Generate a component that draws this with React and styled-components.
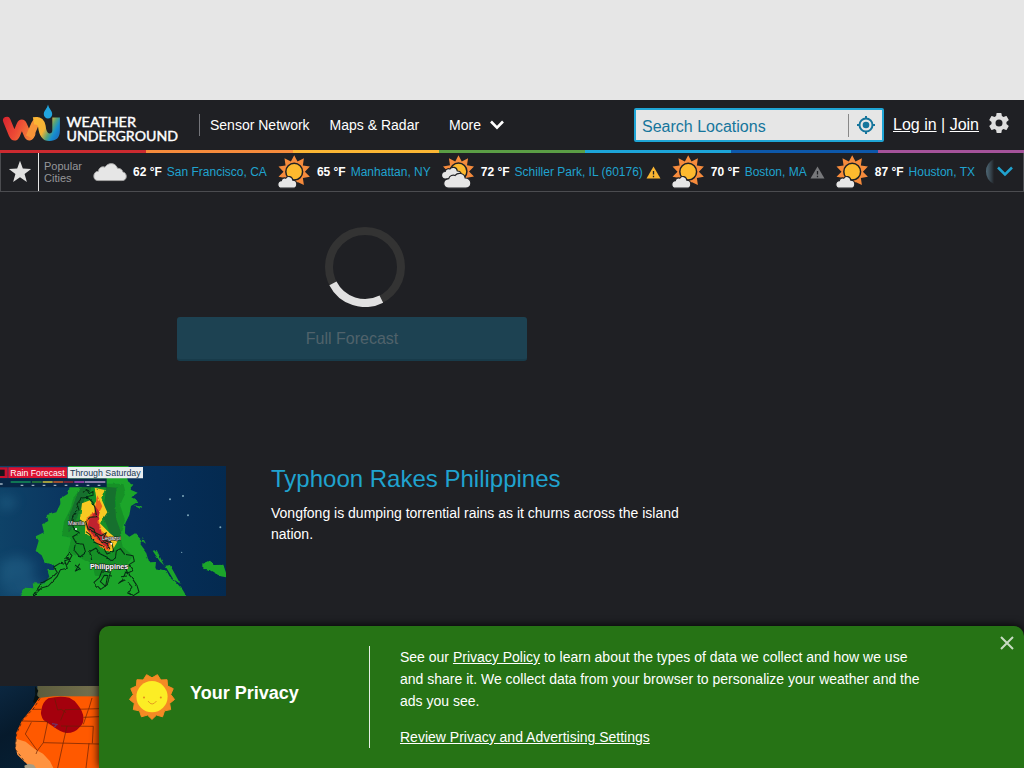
import React from "react";
import styled, { createGlobalStyle } from "styled-components";

const Global = createGlobalStyle`
  * { box-sizing: border-box; }
  html, body { margin: 0; height: 100%; overflow: hidden; background: #1f2024; }
  body { font-family: "Liberation Sans", Arial, sans-serif; color: #fff; }
  svg { display: block; flex: none; }
`;
const Page = styled.div`
  position: relative;
  width: 1024px;
  height: 768px;
  overflow: hidden;
  background: #1f2024;
`;
const AdSlot = styled.div`height: 100px; background: #e6e6e6;`;
const Header = styled.header`
  height: 50px;
  display: flex;
  align-items: center;
  padding-right: 15px;
`;
const Nav = styled.nav`
  display: flex;
  align-items: center;
  height: 22px;
  margin-left: 15px;
  padding-left: 10px;
  border-left: 1px solid #74757a;
  font-size: 14px;
  gap: 20px;
`;
const NavItem = styled.span`
  display: flex;
  align-items: center;
  gap: 9px;
  margin-left: ${(p) => p.$indent || 0}px;
`;
const Search = styled.div`
  margin-left: auto;
  width: 250px;
  height: 34px;
  display: flex;
  align-items: center;
  background: #e6e6e6;
  border: 2px solid #1fa5d5;
  border-radius: 2px;
  color: #15759c;
  font-size: 16px;
  padding: 0 6px;
`;
const SearchLabel = styled.span`flex: 1; padding-top: 3px;`;
const Locate = styled.span`
  height: 23px;
  border-left: 1px solid #888;
  padding-left: 7px;
  display: flex;
  align-items: center;
`;
const Account = styled.div`
  margin-left: 9px;
  margin-right: 10px;
  font-size: 16px;
  white-space: pre;
`;
const Settings = styled.span`padding-bottom: 4px;`;
const Link = styled.a`color: inherit; text-decoration: underline;`;
const Stripes = styled.div`display: flex; height: 3px;`;
const Stripe = styled.i`flex: 1; background: ${(p) => p.$color};`;
const CityBar = styled.div`
  position: relative;
  height: 39px;
  display: flex;
  align-items: center;
  border: 1px solid #4b4c50;
  border-top: 0;
  font-size: 12px;
  white-space: nowrap;
`;
const StarBox = styled.div`
  width: 38px;
  height: 38px;
  border-right: 1px solid #e6e6e6;
  display: flex;
  align-items: center;
  justify-content: center;
`;
const Popular = styled.div`
  width: 44px;
  margin-left: 5px;
  font-size: 11px;
  line-height: 12px;
  color: #96979a;
  padding-bottom: 1px;
`;
const Cities = styled.div`display: flex; gap: 10px; margin-left: 5px;`;
const City = styled.div`display: flex; align-items: center; height: 34px;`;
const Temp = styled.b`margin: 0 5px 0 6px;`;
const Place = styled.span`color: #20a3cf;`;
const Alert = styled.span`margin-left: 3px;`;
const More = styled.div`
  position: absolute;
  right: 0;
  top: 0;
  width: 39px;
  height: 38px;
  display: flex;
  align-items: center;
`;
const Forecast = styled.section`
  width: 350px;
  margin: 35px 0 0 177px;
  display: flex;
  flex-direction: column;
`;
const Spinner = styled.div`padding-left: 148px; margin-bottom: 10px;`;
const ForecastButton = styled.div`
  height: 44px;
  border-radius: 3px;
  background: #1d4252;
  border-bottom: 2px solid #183b4a;
  color: #50626b;
  font-size: 16px;
  line-height: 43px;
  text-align: center;
`;
const Story = styled.article`
  display: flex;
  margin-top: ${(p) => p.$top}px;
  height: 130px;
`;
const StoryText = styled.div`margin-left: 45px; width: 430px;`;
const Title = styled.h2`
  margin: -2px 0 0;
  font-size: 24px;
  font-weight: 400;
  line-height: 30px;
  color: #20a3cf;
`;
const Summary = styled.p`margin: 9px 0 0; font-size: 14px; line-height: 21px;`;
const Privacy = styled.aside`
  position: absolute;
  left: 99px;
  right: 0;
  bottom: 0;
  height: 142px;
  display: flex;
  padding: 20px 0 20px 29px;
  background: #267315;
  border-radius: 10px 10px 0 0;
  box-shadow: 0 0 10px #000;
`;
const PrivacyBrand = styled.div`
  width: 242px;
  height: 102px;
  display: flex;
  align-items: center;
  border-right: 1px solid #e6efe4;
  font-size: 18px;
  font-weight: 700;
  gap: 14px;
`;
const BrandName = styled.span`margin-top: -8px;`;
const PrivacyText = styled.div`
  width: 530px;
  margin-left: 30px;
  font-size: 14px;
  line-height: 22px;
  p { margin: 0 0 14px; }
`;
const Close = styled.div`position: absolute; right: 10px; top: 10px;`;

const star = (cx, cy, outer, inner, n, turn = 0) =>
  Array.from({ length: n * 2 }, (_, i) => {
    const r = i % 2 ? inner : outer;
    const a = (Math.PI * i) / n - Math.PI / 2 + turn;
    return `${(cx + r * Math.cos(a)).toFixed(2)},${(cy + r * Math.sin(a)).toFixed(2)}`;
  }).join(" ");

const Logo = () => (
  <svg width="184" height="50" viewBox="0 100 184 50">
    <defs>
      <linearGradient id="lw" gradientUnits="userSpaceOnUse" x1="3" y1="120" x2="36" y2="136">
        <stop offset="0" stopColor="#d9262f" /><stop offset=".45" stopColor="#ec4a35" /><stop offset="1" stopColor="#f7913a" />
      </linearGradient>
      <linearGradient id="ly" gradientUnits="userSpaceOnUse" x1="36" y1="122" x2="58" y2="134">
        <stop offset="0" stopColor="#fbb634" /><stop offset=".42" stopColor="#f5b335" /><stop offset=".66" stopColor="#5aa477" /><stop offset=".85" stopColor="#168fd0" /><stop offset="1" stopColor="#1b78c4" />
      </linearGradient>
    </defs>
    <g fill="none" strokeWidth="7.600" strokeLinejoin="round">
      <path d="M6.800 120.600L12.600 134.800Q14.400 138.800 16.300 134.800L20.200 125.200Q21.800 121.600 23.400 125.200L27.600 134.800Q29.500 138.800 31.500 134.300" stroke="url(#lw)" strokeLinecap="round" />
      <path d="M29.500 137L34.800 124.500Q36.600 121 38.500 120.800" stroke="#f79438" />
      <path d="M33.600 121Q40.500 119.600 41.800 126Q43 137.200 49.200 137.200Q56.100 137.200 56.100 130.500V117.500" stroke="url(#ly)" />
    </g>
    <path d="M48 104.500C49 109 52.200 110.500 52.200 114.200A4.200 4.200 0 0 1 43.800 114.200C43.800 110.500 47 109 48 104.500Z" fill="#22a4dd" />
    <g fill="#fff" fontFamily="Lato, sans-serif" fontSize="13.500" fontWeight="400" stroke="#fff" strokeWidth=".4">
      <text x="66.500" y="127" textLength="69.500" lengthAdjust="spacingAndGlyphs">WEATHER</text>
      <text x="66.500" y="141" textLength="111.500" lengthAdjust="spacingAndGlyphs">UNDERGROUND</text>
    </g>
  </svg>
);
const Chevron = () => (
  <svg width="14" height="10" viewBox="0 0 14 10">
    <path d="M1 1.500L7 7.700L13 1.500" fill="none" stroke="#fff" strokeWidth="2.600" />
  </svg>
);
const Target = () => (
  <svg width="20" height="20" viewBox="0 0 20 20" fill="none" stroke="#15759c" strokeWidth="2">
    <circle cx="10" cy="10" r="6.500" /><circle cx="10" cy="10" r="3.300" fill="#15759c" stroke="none" />
    <path d="M10 1V4M10 16V19M1 10H4M16 10H19" />
  </svg>
);
const Gear = () => (
  <svg width="20" height="20" viewBox="2 2 20 20">
    <path fill="#dedede" fillRule="evenodd" d="M19.430 12.980c.04-.32.07-.64.07-.98s-.03-.66-.07-.98l2.110-1.650c.19-.15.24-.42.12-.64l-2-3.460c-.12-.22-.39-.3-.61-.22l-2.490 1c-.52-.4-1.080-.73-1.690-.98l-.38-2.650A.488.488 0 0 0 14 2h-4c-.25 0-.46.18-.49.42l-.38 2.650c-.61.25-1.170.59-1.690.98l-2.490-1c-.23-.09-.49 0-.61.22l-2 3.460c-.13.22-.07.49.12.64l2.110 1.650c-.04.32-.07.65-.07.98s.03.66.07.98l-2.110 1.650c-.19.15-.24.42-.12.64l2 3.460c.12.22.39.3.61.22l2.490-1c.52.4 1.080.73 1.690.98l.38 2.650c.03.24.24.42.49.42h4c.25 0 .46-.18.49-.42l.38-2.650c.61-.25 1.170-.59 1.690-.98l2.490 1c.23.09.49 0 .61-.22l2-3.460c.12-.22.07-.49-.12-.64zM12 15.500a3.500 3.500 0 1 1 0-7 3.500 3.500 0 0 1 0 7z" />
  </svg>
);
const cloudShape = "M4.500 17.500C1.500 17.500 .3 15.500 .3 13.200C.3 10.500 2.300 8.600 5 8.600C5 5.500 8.500 3.500 11.500 4.800C14 .5 21.500-.5 24 5.800C27.500 5.800 29 7.500 29.200 9.300C31.500 9.600 32.800 11.500 32.800 13.500C32.800 16 31 17.500 28.500 17.500Z";
const smallCloud = "M4 12.500C1.500 12.500 .5 10.700 .5 8.800C.5 6.500 2 5.200 4 5C4.500 2.500 7 1.800 8.500 2.500C10.500 -.3 15 .5 15.500 4.500C18 4.500 19.500 6.500 19.500 8.500C19.500 11 18 12.500 15.800 12.500Z";
const Cloud = ({ x, y, sx = 1, sy = 1, d = smallCloud }) => (
  <path d={d} transform={`translate(${x} ${y}) scale(${sx} ${sy})`} fill="#e6e6e6" stroke="#1f2024" strokeWidth="1.200" vectorEffect="non-scaling-stroke" />
);
const WeatherIcon = ({ kind }) => (
  <svg width="34" height="34" viewBox="0 0 34 34">
    {kind === "cloud" && <path d={cloudShape} transform="translate(.5 7.200) scale(1 1.050)" fill="#e6e6e6" stroke="#a5a5a5" strokeWidth=".9" />}
    {kind === "sun" && <>
      <polygon points={star(17.200, 16.700, 16.500, 10.700, 10)} fill="#f68b3c" />
      <circle cx="17.200" cy="16.700" r="8.400" fill="#fdb92e" stroke="#1f2024" strokeWidth="1.500" />
      <Cloud x={0.300} y={20.700} />
    </>}
    {kind === "partly" && <>
      <polygon points={star(17.500, 16.500, 16.300, 10.500, 10)} fill="#f68b3c" />
      <circle cx="17.500" cy="16.500" r="8.400" fill="#fdb92e" stroke="#1f2024" strokeWidth="1.500" />
      <Cloud x={0} y={11.500} sx={1.050} />
      <Cloud x={2} y={17.300} sx={1.430} sy={1.270} />
    </>}
  </svg>
);
const Warning = ({ color }) => (
  <svg width="15" height="13" viewBox="0 0 15 13">
    <path d="M7.500.500L14.500 12.500H.500Z" fill={color} />
    <path d="M7.500 5V8.500M7.500 9.700V11.200" stroke="#1f2024" strokeWidth="1.300" />
  </svg>
);
const Ring = () => (
  <svg width="80" height="80" viewBox="0 0 80 80" fill="none" strokeWidth="8">
    <circle cx="40" cy="40" r="36" stroke="#333" />
    <path d="M7.930 56.350A36 36 0 0 0 56.350 72.070" stroke="#e1e1e1" />
  </svg>
);
const TyphoonMap = () => (
  <svg width="226" height="130" viewBox="0 18 678 390" preserveAspectRatio="none">
    <defs>
      <linearGradient id="sea" x1="0" x2="1"><stop stopColor="#0e4268" /><stop offset=".3" stopColor="#0a355f" /><stop offset=".7" stopColor="#062e58" /><stop offset="1" stopColor="#042a50" /></linearGradient>
      <filter id="soft"><feGaussianBlur stdDeviation="16" /></filter>
      <filter id="rough" x="0" y="0" width="1" height="1"><feTurbulence type="fractalNoise" baseFrequency=".06" numOctaves="2" seed="4" /><feDisplacementMap in="SourceGraphic" scale="8" xChannelSelector="R" yChannelSelector="G" /></filter>
    </defs>
    <path fill="url(#sea)" d="M0 18H678V408H0Z" />
    <g filter="url(#soft)" opacity=".35" fill="#327aa0"><path d="M0 305L55 285L110 315L90 350L0 385Z" /><path d="M0 105L55 120L30 150L0 145Z" /><path d="M20 390L90 350L130 370L100 408H0Z" /></g>
    <g filter="url(#rough)">
      <path fill="#1ba52c" d="M205 18H385L395 38L380 50L385 65L400 74L388 88L413 98L394 112L416 124L393 138L388 165L376 190L375 220L388 230L405 220L428 244L421 252L437 274L447 307L468 306L466 325L500 332L508 348L528 367L548 389L563 415H55L75 383L100 385L98 370L132 371L148 350L142 330L162 330L162 315L134 307L125 286L107 273L116 242L107 229L132 217L126 193L145 183L140 165L169 157L181 132L180 116L203 102L212 75Z" />
      <path fill="#129028" d="M255 70L370 72L377 98L360 135L375 180L360 225L368 260L399 287L380 315L342 310L318 350L285 347L278 315L238 292L204 275L214 233L186 228L192 185L212 145L220 113Z" />
      <path fill="#14702d" d="M318 80L350 83L345 120L348 175L364 220L340 245L310 170ZM238 85L275 80L240 150L222 195L205 220L207 170Z" />
      <path fill="#f8c923" d="M284 83L314 90L304 116L322 157L300 190L329 219L355 240L335 275L310 270L278 233L255 220L256 191L240 178L246 130L270 121L280 138L290 121Z" />
      <path fill="#ef641f" d="M292 106L307 139L292 169L306 213L335 239L328 275L301 262L274 232L256 199L259 174L282 158Z" />
      <path fill="#bf202e" d="M283 135L299 157L292 187L306 219L330 242L322 265L301 246L280 225L261 209L268 176L288 157Z" />
      <path fill="#1ba52c" d="M607 312L630 302L644 315L670 314L678 338V352L662 349L642 338L625 328L607 327ZM458 272L470 270L493 318L510 315L541 371L520 358L498 322L479 304ZM400 136L427 141L420 146ZM427 230L430 246L438 251Z" />
      <g fill="none" stroke="#062f12" strokeWidth="3.200" strokeLinejoin="round">
        <path d="M237 151L231 132L245 114L263 112L278 127L284 140L290 170L270 172L257 184L264 206L281 216L304 227L319 218L308 238L336 249L341 274L321 282L307 257L281 246L270 224L258 215M231 151L218 168L216 180L220 203L238 219L218 230L229 250L250 253L257 278L240 291L222 270L228 243" />
        <path d="M275 300L269 275L288 264L300 281L320 291L333 302L346 294L349 273L361 266L374 283L399 287L403 304L387 314L398 332L383 339L375 321L353 327M324 335L306 332L298 353L282 367L302 388L322 374L331 338L324 335M355 371L368 360L377 336L393 350L411 377L417 396L400 407L383 399L396 381L384 367" />
        <path d="M99 406L124 370L159 350L172 337L161 321L184 307L202 313L216 286L208 279L197 295L210 297L194 302L202 325L181 329L171 350L145 378L124 384L99 408" />
        <path d="M249 97L260 88L268 101L279 94L279 106L258 110M225 315L240 326L226 333L239 311M323 345L317 379L301 365L313 346L336 348M363 350L381 348M359 367L377 359M288 222L304 243L320 250L330 268M268 200L282 208L286 220" />
      </g>
    </g>
    <g fill="#7fa8bb"><circle cx="510" cy="118" r="3" /><circle cx="549" cy="108" r="3" /><circle cx="564" cy="166" r="3" /><circle cx="661" cy="202" r="3" /><circle cx="545" cy="277" r="2" /></g>
    <path fill="#082646" d="M0 55H320V82H0Z" />
    <g strokeWidth="4"><path stroke="#16a05c" d="M32 66H92" /><path stroke="#2e9136" d="M96 66H125" /><path stroke="#ecd83b" d="M128 66H158" /><path stroke="#e86325" d="M160 66H190" /><path stroke="#a72534" d="M192 66H220" /><path stroke="#c44bc6" d="M223 66H252" /><path stroke="#c8a7dc" d="M254 66H316" /></g>
    <path stroke="#9fb2c2" strokeWidth="4" strokeDasharray="8 25" d="M62 76H310M0 72H20" />
    <path fill="#c8102e" d="M0 22H23V54H0Z" /><path fill="#19151c" d="M0 29H14V48H0Z" /><path fill="#da1232" d="M25 22H201V54H25Z" /><path fill="#e9edf0" d="M203 21H429V55H203Z" />
    <g fontFamily="Liberation Sans, sans-serif" fontSize="26">
      <text x="31" y="48" textLength="163" lengthAdjust="spacingAndGlyphs" fill="#fff">Rain Forecast</text><text x="210" y="48" textLength="212" lengthAdjust="spacingAndGlyphs" fill="#193952">Through Saturday</text>
      <g fill="#fff" stroke="#222" strokeWidth="3" paintOrder="stroke"><text x="204" y="195" fontSize="18" textLength="50" lengthAdjust="spacingAndGlyphs">Manila</text><text x="306" y="240" fontSize="18" textLength="56" lengthAdjust="spacingAndGlyphs">Legazpi</text><text x="270" y="327" fontSize="21" fontWeight="700" textLength="115" lengthAdjust="spacingAndGlyphs">Philippines</text></g>
      <circle cx="228" cy="207" r="3" fill="#fff" /><circle cx="334" cy="251" r="3" fill="#fff" />
    </g>
  </svg>
);
const HeatMap = () => (
  <svg width="226" height="130" viewBox="0 198 678 390">
    <defs>
      <linearGradient id="pacific" x1="0" y1="0" x2="1" y2="1"><stop stopColor="#0b2740" /><stop offset=".2" stopColor="#061a2c" /><stop offset="1" stopColor="#07304b" /></linearGradient>
      <linearGradient id="land" x1="0" y1="0" x2="1" y2="0"><stop stopColor="#5b5c3d" /><stop offset=".5" stopColor="#837b57" /><stop offset="1" stopColor="#6a6746" /></linearGradient>
    </defs>
    <path fill="url(#pacific)" d="M0 198H678V588H0Z" /><path fill="url(#land)" d="M112 198H678V240H112Z" />
    <path d="M105 199L115 212L109 225L120 235L112 250L99 247L106 224Z" fill="#07110f" />
    <path fill="#ff5900" d="M117 234L160 229L678 230V588H140L75 410L47 390L48 340L66 301L95 266Z" />
    <path fill="#ff9340" d="M48 356L77 365L104 387L129 401L150 424L160 444H96L77 429L52 404L46 381Z" />
    <path fill="#a79d85" d="M73 437L85 431L101 434L110 447H75Z" />
    <path fill="#a4000d" d="M145 235Q178 227 208 233Q224 240 233 254Q250 275 250 292Q252 310 240 320Q225 339 200 339Q180 336 163 322L131 301Q120 285 124 270Q128 245 145 235Z" />
    <g fill="none" stroke="#642006" strokeWidth="2">
      <path d="M68 303L143 305M98 268L124 268M94 307L76 342L112 392L130 368L297 372M143 306L130 368M183 318L280 319L277 370M201 318L189 371L173 444M267 370L258 444M250 292L297 290M265 269L250 313M297 266L195 269L182 301M164 235L173 270L184 268L198 278M276 234L266 268M112 392L108 402" />
    </g>
    <path d="M156 311L173 314M162 322L169 316" stroke="#6d3268" strokeWidth="4" />
    <path d="M120 235L102 264L68 300L50 341L46 388L67 415L82 438" fill="none" stroke="#111719" strokeWidth="2" strokeDasharray="9 7" />
  </svg>
);
const Mascot = () => (
  <svg width="48" height="48" viewBox="0 0 48 48">
    <polygon points={star(24, 23.700, 22.700, 18.900, 13, Math.PI)} fill="#f58a24" stroke="#f58a24" strokeLinejoin="round" />
    <circle cx="24" cy="23.700" r="15.600" fill="#fced25" />
    <circle cx="16" cy="24.500" r="1" fill="#e48b1e" /><circle cx="32.800" cy="24.500" r="1" fill="#e48b1e" />
    <path d="M20 28Q24 34 28.500 28" fill="none" stroke="#e49b20" strokeWidth="1" />
  </svg>
);

const cities = [
  ["cloud", "62", "San Francisco, CA"],
  ["sun", "65", "Manhattan, NY"],
  ["partly", "72", "Schiller Park, IL (60176)", "#f9b532"],
  ["sun", "70", "Boston, MA", "#77787b"],
  ["sun", "87", "Houston, TX"],
];
const stripeColors = ["#cc2a30", "#f68b3c", "#fbb634", "#5b9e45", "#1da5d9", "#0d58ab", "#a5539b"];

export default function App() {
  return (
    <Page>
      <Global />
      <AdSlot />
      <Header>
        <Logo />
        <Nav>
          <NavItem>Sensor Network</NavItem>
          <NavItem>Maps &amp; Radar</NavItem>
          <NavItem $indent={10}>More <Chevron /></NavItem>
        </Nav>
        <Search><SearchLabel>Search Locations</SearchLabel><Locate><Target /></Locate></Search>
        <Account><Link>Log in</Link> | <Link>Join</Link></Account>
        <Settings><Gear /></Settings>
      </Header>
      <Stripes>{stripeColors.map((c) => <Stripe key={c} $color={c} />)}</Stripes>
      <CityBar>
        <StarBox><svg width="24" height="24" viewBox="0 0 24 24"><polygon points={star(12, 12.500, 11.700, 4.800, 5)} fill="#e1e1e1" /></svg></StarBox>
        <Popular>Popular<br />Cities</Popular>
        <Cities>
          {cities.map(([kind, temp, name, alert]) => (
            <City key={name}>
              <WeatherIcon kind={kind} /><Temp>{temp} °F</Temp><Place>{name}</Place>
              {alert && <Alert><Warning color={alert} /></Alert>}
            </City>
          ))}
        </Cities>
        <More>
          <svg width="39" height="38" viewBox="0 0 39 38">
            <defs><linearGradient id="fade"><stop stopColor="#5c7d8e" stopOpacity=".75" /><stop offset="1" stopColor="#1f2024" /></linearGradient></defs>
            <path d="M10 6Q2 10 2 18.500Q2 27 10 31Z" fill="url(#fade)" />
            <path d="M14 14.500L21 21.500L28 14.500" fill="none" stroke="#20a3cf" strokeWidth="2.500" />
          </svg>
        </More>
      </CityBar>
      <Forecast><Spinner><Ring /></Spinner><ForecastButton>Full Forecast</ForecastButton></Forecast>
      <Story $top={105}>
        <TyphoonMap />
        <StoryText>
          <Title>Typhoon Rakes Philippines</Title>
          <Summary>Vongfong is dumping torrential rains as it churns across the island nation.</Summary>
        </StoryText>
      </Story>
      <Story $top={90}><HeatMap /></Story>
      <Privacy>
        <PrivacyBrand><Mascot /><BrandName>Your Privacy</BrandName></PrivacyBrand>
        <PrivacyText>
          <p>See our <Link>Privacy Policy</Link> to learn about the types of data we collect and how we use and share it. We collect data from your browser to personalize your weather and the ads you see.</p>
          <Link>Review Privacy and Advertising Settings</Link>
        </PrivacyText>
        <Close><svg width="14" height="14" viewBox="0 0 14 14"><path d="M1 1L13 13M13 1L1 13" stroke="#c8dcc3" strokeWidth="2" /></svg></Close>
      </Privacy>
    </Page>
  );
}
